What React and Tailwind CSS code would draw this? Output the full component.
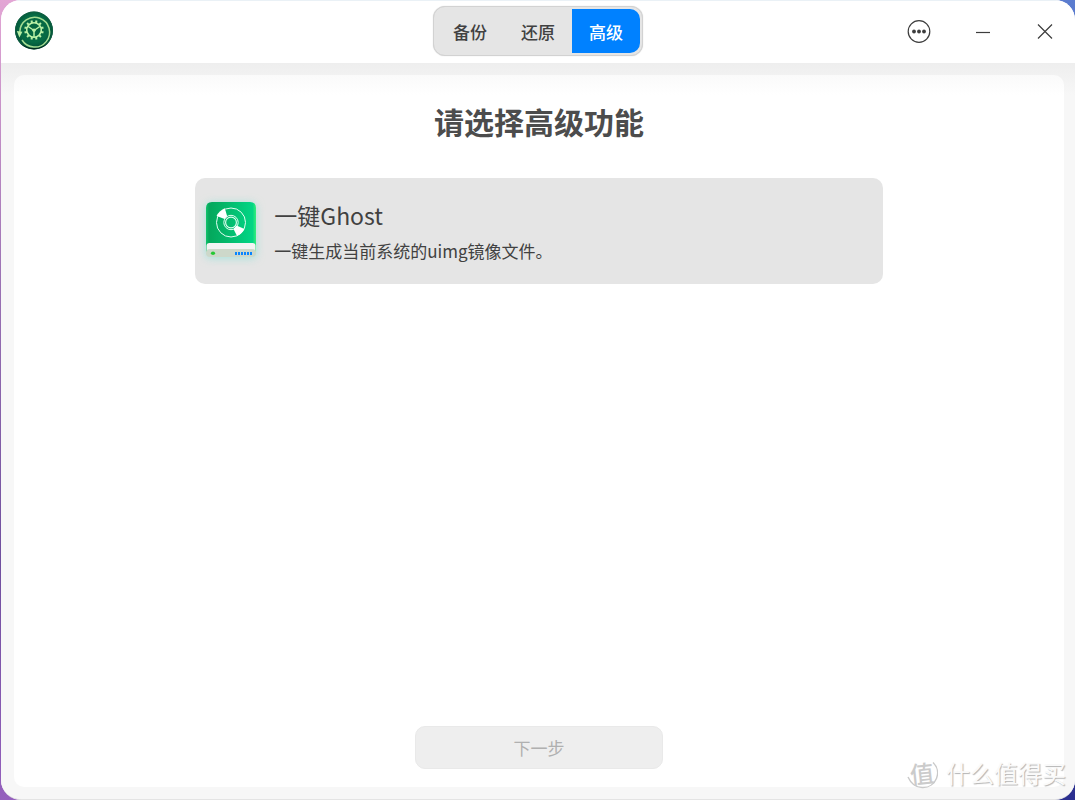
import React, { useState } from "react";

const TEETH = [15, 45, 75, 105, 135, 165, 195, 225, 255, 285, 315, 345];
const LEDS = [30, 33, 36, 39, 42, 45];

function AppLogo() {
  return (
    <svg viewBox="0 0 40 40" className="size-10 shrink-0" role="img" aria-label="Logo">
      <defs>
        <radialGradient id="logoFill" cx="50%" cy="45%" r="55%">
          <stop offset="0" stopColor="#05643f" />
          <stop offset="0.65" stopColor="#066b45" />
          <stop offset="1" stopColor="#034a33" />
        </radialGradient>
      </defs>
      <circle cx="20" cy="19.5" r="19" fill="url(#logoFill)" />
      <circle cx="20" cy="19.5" r="18.4" fill="none" stroke="#0f5f42" strokeWidth="1" />
      <path d="M6 32A19 19 0 0 0 34 32A22 22 0 0 1 6 32Z" fill="#03281d" />
      <path d="M5.8 21A14.9 14.9 0 1 1 8 29" fill="none" stroke="#a3dc92" strokeWidth="1.5" />
      <path d="M2.8 20L8.4 20.8L5.4 26.5Z" fill="#b9f0a5" />
      <g stroke="#b9f0a5" fill="none">
        <circle cx="20" cy="19" r="7.3" strokeWidth="1.6" />
        {TEETH.map((a) => (
          <path key={a} d="M20 11.8V9.2" strokeWidth="2" transform={`rotate(${a} 20 19)`} />
        ))}
        <path d="M20 19.5V26M20 19.5L14.2 15.5M20 19.5L25.8 15.5" strokeWidth="1.5" />
      </g>
      <circle cx="20" cy="19.3" r="1.7" fill="#b9f0a5" />
    </svg>
  );
}

function DiskIcon() {
  return (
    <svg viewBox="0 0 50 56" className="h-14 w-[50px] shrink-0 overflow-visible drop-shadow-[0_1px_4px_rgba(120,225,210,0.6)]" aria-hidden="true">
      <defs>
        <linearGradient id="diskFill" x1="0" x2="1" y1="0" y2="0">
          <stop offset="0" stopColor="#12c56c" />
          <stop offset="0.06" stopColor="#04a75c" />
          <stop offset="0.35" stopColor="#04b568" />
          <stop offset="0.93" stopColor="#02d585" />
          <stop offset="1" stopColor="#35ee7b" />
        </linearGradient>
      </defs>
      <path d="M6 0H44Q50 0 50 6V50H0V6Q0 0 6 0Z" fill="url(#diskFill)" />
      <path d="M0.5 46V44Q0.5 41 3.5 41H46.5Q49.5 41 49.5 44V51H0.5Z" fill="#f3f3f3" />
      <rect x="0" y="47" width="50" height="8" rx="4" fill="#cdd8ca" />
      <g fill="none" stroke="#e3fff3">
        <circle cx="25" cy="20.5" r="14.5" strokeWidth="1" />
        <circle cx="25" cy="20.5" r="7.2" strokeWidth="1" />
        <circle cx="25" cy="20.5" r="5.4" strokeWidth="1.1" />
      </g>
      <path d="M10.6 14Q13 8.8 18.8 6.3L21.2 14.2L18.6 17Z" fill="#fff" />
      <path d="M30.5 23.5L38.5 27Q36.5 31.5 31 34L27.5 27Z" fill="#fff" />
      <ellipse cx="7" cy="51.3" rx="2.1" ry="1.7" fill="#25c934" />
      {LEDS.map((x) => (
        <rect key={x} x={x - 1} y="50" width="2" height="3" fill="#0785ff" />
      ))}
    </svg>
  );
}

function WindowControls() {
  return (
    <div className="flex items-center justify-end gap-9 pr-[7px]">
      <button type="button" aria-label="菜单" className="flex size-6 items-center justify-center text-[#3d3d3d]">
        <svg viewBox="0 0 24 24" className="size-6" fill="none" stroke="currentColor">
          <circle cx="12" cy="12.5" r="10.8" strokeWidth="1.2" />
          <g fill="currentColor" stroke="none">
            <circle cx="7" cy="12.5" r="1.9" />
            <circle cx="12" cy="12.5" r="1.9" />
            <circle cx="17" cy="12.5" r="1.9" />
          </g>
        </svg>
      </button>
      <button type="button" aria-label="最小化" className="flex h-6 w-8 items-center justify-center text-[#3d3d3d]">
        <svg viewBox="0 0 24 24" className="size-6" fill="none" stroke="currentColor">
          <path d="M5 13.5H19" strokeWidth="1.2" />
        </svg>
      </button>
      <button type="button" aria-label="关闭" className="flex size-5 items-center justify-center text-[#3d3d3d]">
        <svg viewBox="0 0 20 20" className="size-5" fill="none" stroke="currentColor">
          <path d="M3 3.5L17 17.5M17 3.5L3 17.5" strokeWidth="1.2" />
        </svg>
      </button>
    </div>
  );
}

function Watermark() {
  return (
    <div className="pointer-events-none absolute right-[9px] bottom-2.5 flex items-center gap-2 text-[#fafafa]">
      <span className="relative flex size-8 items-center justify-center text-[24px] leading-8 font-medium text-[#cbcbcb]">
        <svg viewBox="0 0 32 32" className="absolute inset-0 size-8" fill="none" stroke="#c9c9c9">
          <path d="M27 5.5A14.5 14.5 0 0 1 17 30.5Q7 31 2 20" strokeWidth="1.4" />
        </svg>
        <span className="-rotate-6">值</span>
      </span>
      <span className="text-[24px] leading-8 [text-shadow:1px_1px_1px_#b4b4b4]">什么值得买</span>
    </div>
  );
}

export default function App() {
  const [tab, setTab] = useState("高级");
  return (
    <div className="flex min-h-screen bg-[linear-gradient(to_bottom,#e3a6d5,#9b72b4_35%,#6f4f9e_70%,#9560bd)] font-['Noto_Sans_CJK_SC',sans-serif] text-[#414141]">
      <div className="flex flex-1 bg-[linear-gradient(to_bottom,#5b7ccf,#2b2f8f)] bg-[length:50%_100%] bg-right bg-no-repeat pl-px">
        <div className="relative flex flex-1 flex-col overflow-hidden rounded-[20px] border-b border-[#e4e4e4] bg-[#f7f7f7]">
          <header className="grid h-[63px] grid-cols-[1fr_auto_1fr] items-center bg-white px-[13px] pb-px shadow-[inset_0_1px_0_#eaf1f6]">
            <AppLogo />
            <nav className="flex h-[50px] rounded-xl border border-[#d2d2d2] bg-[#e5e5e5] p-0.5 shadow-[0_0_1px_#c8c8c8]">
              {["备份", "还原", "高级"].map((name) => (
                <button
                  key={name}
                  type="button"
                  aria-pressed={tab === name}
                  onClick={() => setTab(name)}
                  className={
                    "w-[68px] pt-0.5 text-[17px] leading-6 font-medium last:rounded-r-[10px] first:rounded-l-[10px] " +
                    (tab === name ? "bg-[#0081ff] text-white" : "text-[#414141]")
                  }
                >
                  {name}
                </button>
              ))}
            </nav>
            <WindowControls />
          </header>
          <div className="flex flex-1 flex-col bg-[linear-gradient(to_bottom,#eeeeee,#f7f7f7_32px)] pt-3 pr-[11px] pb-3 pl-[13px]">
            <main className="flex flex-1 flex-col items-center rounded-[10px] bg-[linear-gradient(to_bottom,#fafafa,#ffffff_20px)] px-3 pt-6 pb-[18px]">
              <h1 className="text-[30px] leading-11 font-bold text-[#4c4c4c]">请选择高级功能</h1>
              <button
                type="button"
                className="mt-[35px] flex h-[106px] w-[67%] items-center gap-[18px] rounded-[10px] bg-[#e5e5e5] px-[11px] pb-0.5 text-left"
              >
                <DiskIcon />
                <span className="flex flex-col gap-1 pt-0.5">
                  <span className="text-[23px] leading-9">一键Ghost</span>
                  <span className="text-[17px] leading-7">一键生成当前系统的uimg镜像文件。</span>
                </span>
              </button>
              <button
                type="button"
                disabled
                className="mt-auto h-[43px] w-[248px] rounded-[10px] border border-[#e9e9e9] bg-[#eeeeee] text-[17px] text-[#b0b0b0]"
              >
                下一步
              </button>
            </main>
          </div>
          <Watermark />
        </div>
      </div>
    </div>
  );
}
